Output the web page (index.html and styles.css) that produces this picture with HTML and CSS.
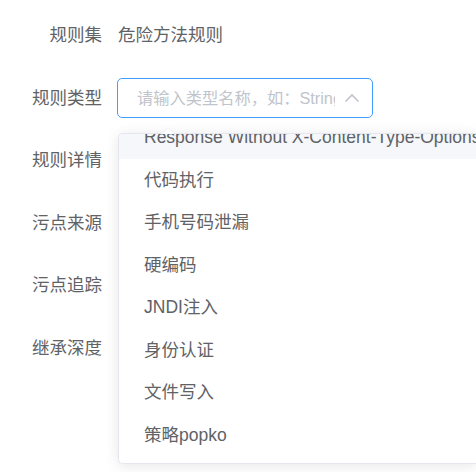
FILE: index.html
```html
<!DOCTYPE html>
<html lang="zh-CN">
<head>
<meta charset="utf-8">
<title>规则</title>
<link rel="stylesheet" href="styles.css">
</head>
<body>
<form class="form">
  <div class="row">
    <label class="label">规则集</label>
    <div class="content"><span class="value">危险方法规则</span></div>
  </div>
  <div class="row">
    <label class="label">规则类型</label>
    <div class="content">
      <div class="select">
        <div class="input">
          <span class="placeholder">请输入类型名称，如：String</span>
          <svg class="chevron" width="16" height="10" viewBox="0 0 16 10"><path d="M1.5 8.5 L8 2 L14.5 8.5" fill="none" stroke="#c0c4cc" stroke-width="1.6"/></svg>
        </div>
        <div class="dropdown">
          <span class="arrow"></span>
          <div class="wrap">
            <ul class="list">
              <li class="item hover">Response Without X-Content-Type-Options</li>
              <li class="item">代码执行</li>
              <li class="item">手机号码泄漏</li>
              <li class="item">硬编码</li>
              <li class="item">JNDI注入</li>
              <li class="item">身份认证</li>
              <li class="item">文件写入</li>
              <li class="item">策略popko</li>
            </ul>
          </div>
        </div>
      </div>
    </div>
  </div>
  <div class="row"><label class="label">规则详情</label><div class="content"></div></div>
  <div class="row"><label class="label">污点来源</label><div class="content"></div></div>
  <div class="row"><label class="label">污点追踪</label><div class="content"></div></div>
  <div class="row"><label class="label">继承深度</label><div class="content"></div></div>
</form>
</body>
</html>
```

FILE: styles.css
```css
html {
  height: 100%;
}
body {
  margin: 0;
  padding: 0;
  min-height: 100%;
  background: #fff;
  font-family: "Liberation Sans", "Noto Sans CJK SC", sans-serif;
  font-size: 17.5px;
  color: #606266;
}
.form {
  padding-top: 15px;
}
.row {
  display: flex;
  height: 40px;
  margin-bottom: 22.5px;
}
.label {
  width: 117px;
  box-sizing: border-box;
  padding-right: 15px;
  text-align: right;
  line-height: 40px;
  flex-shrink: 0;
}
.content {
  flex: 1;
  line-height: 40px;
  position: relative;
}
.value {
  padding-left: 1px;
}
.select {
  position: relative;
  width: 256px;
}
.input {
  box-sizing: border-box;
  width: 256px;
  height: 40px;
  border: 1.25px solid #409eff;
  border-radius: 5px;
  padding: 0 37px 0 19px;
  position: relative;
  overflow: hidden;
  white-space: nowrap;
  font-size: 16.25px;
}
.placeholder {
  display: block;
  overflow: hidden;
  color: #c0c4cc;
  line-height: 38px;
}
.chevron {
  position: absolute;
  right: 12px;
  top: 14px;
}
.dropdown {
  position: absolute;
  top: 55px;
  left: 1px;
  width: 358px;
  height: 331px;
  box-sizing: border-box;
  border: 1px solid #e4e7ed;
  border-right: none;
  border-radius: 5px 0 0 5px;
  background: #fff;
  box-shadow: 0 2px 14px rgba(0, 0, 0, 0.1);
  z-index: 10;
}
.arrow {
  position: absolute;
  top: -7px;
  left: 42px;
  width: 0;
  height: 0;
  border-left: 7px solid transparent;
  border-right: 7px solid transparent;
  border-bottom: 7px solid #ebeef5;
}
.arrow::after {
  content: "";
  position: absolute;
  left: -6px;
  top: 1.5px;
  border-left: 6px solid transparent;
  border-right: 6px solid transparent;
  border-bottom: 6px solid #fff;
}
.wrap {
  height: 100%;
  overflow: hidden;
  border-radius: 5px 0 0 5px;
}
.list {
  list-style: none;
  margin: -17.5px 0 0;
  padding: 0;
}
.item {
  height: 42.5px;
  line-height: 42.5px;
  padding: 0 25px;
  white-space: nowrap;
  color: #606266;
}
.item.hover {
  background: #f5f7fa;
}
```
